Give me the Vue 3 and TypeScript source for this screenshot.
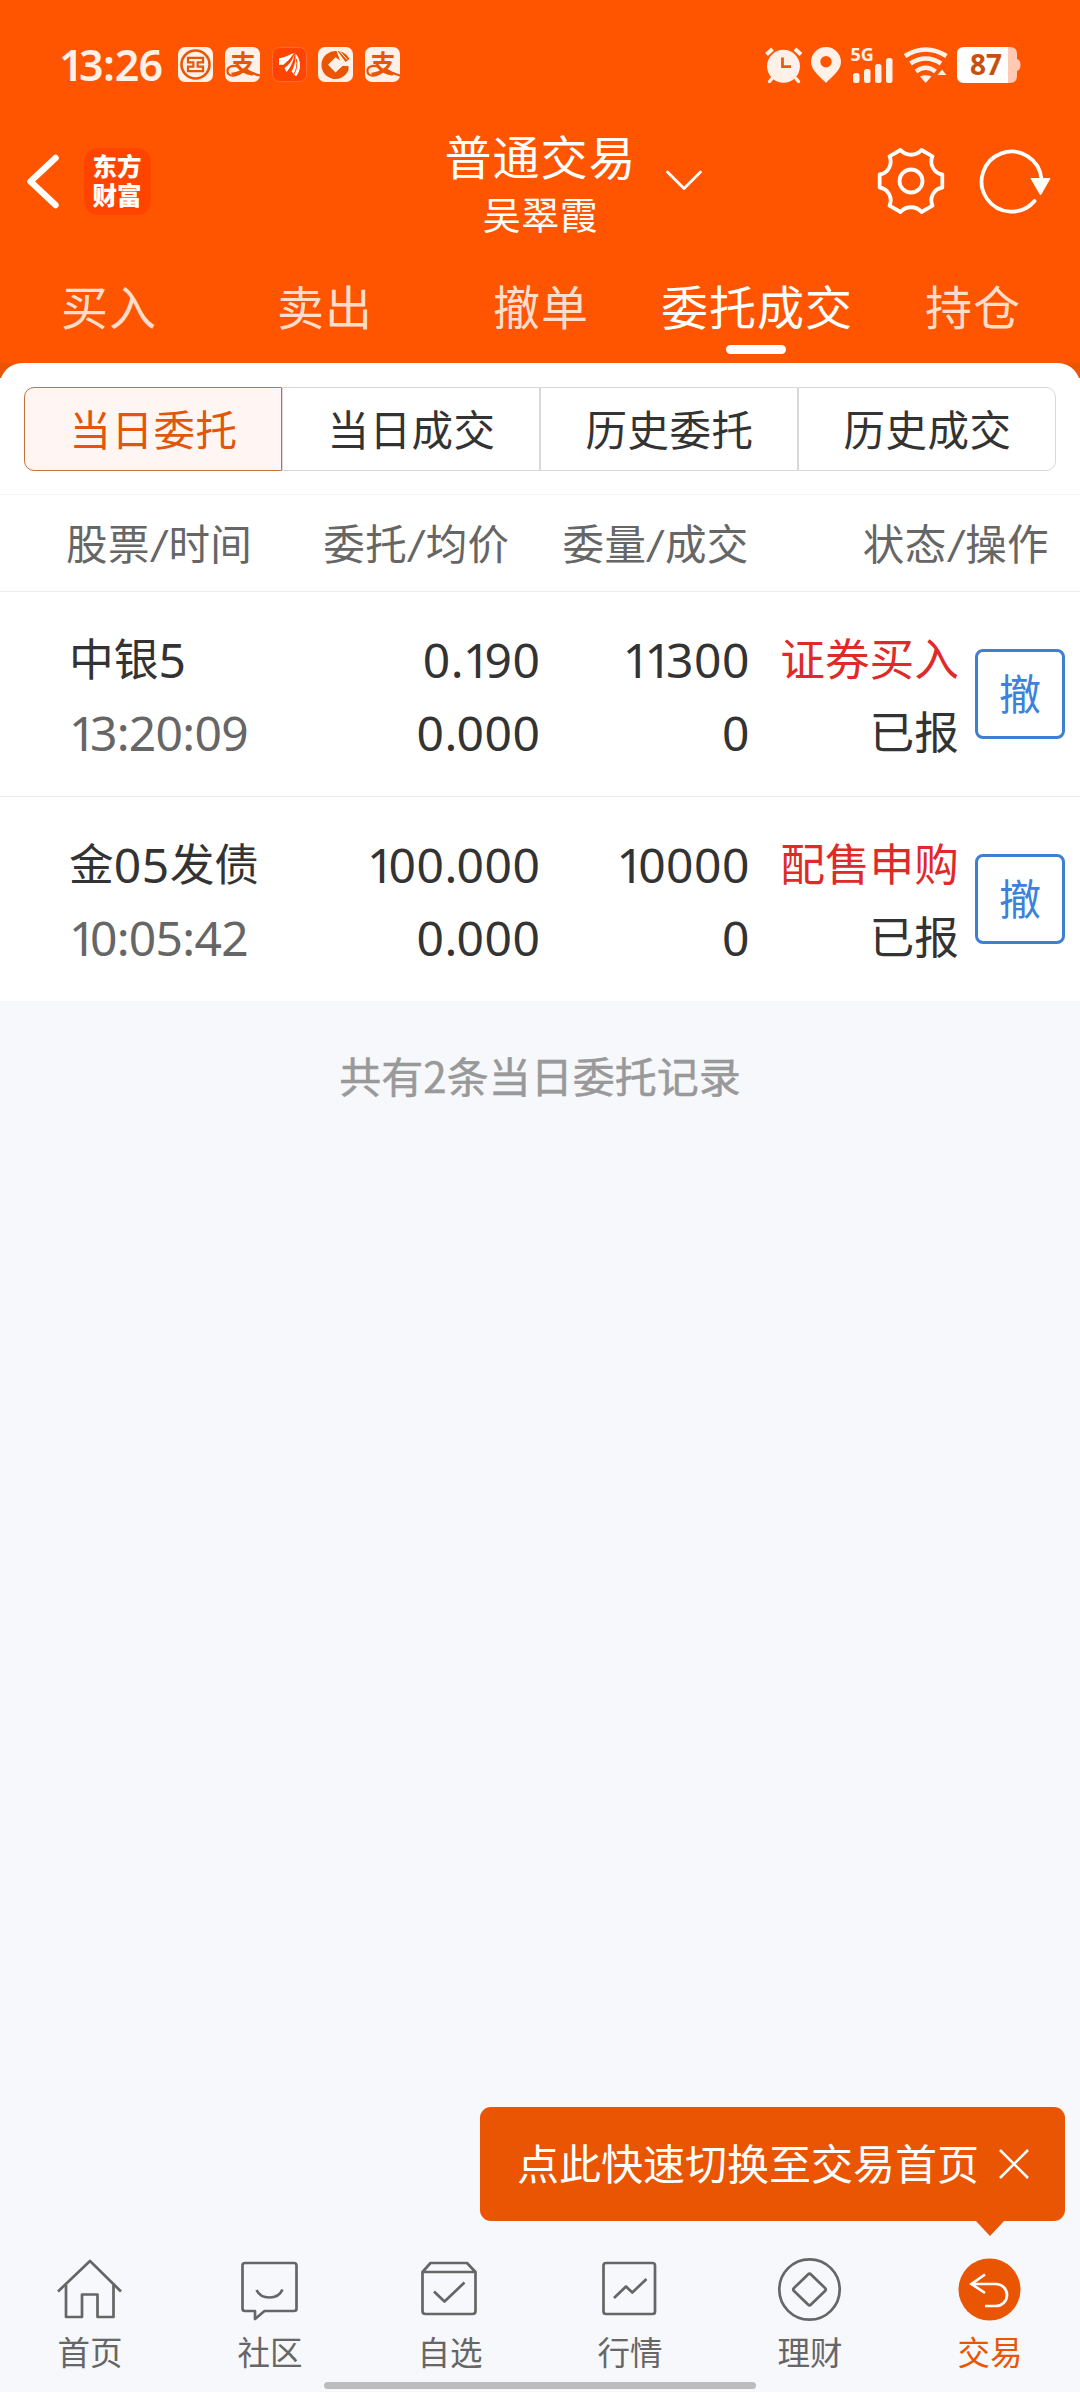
<script setup lang="ts">
interface Order {
  name: string
  time: string
  price: string
  avg: string
  qty: string
  filled: string
  side: string
  status: string
}

const tabs: string[] = ['买入', '卖出', '撤单', '委托成交', '持仓']
const activeTab = 3

const segments: string[] = ['当日委托', '当日成交', '历史委托', '历史成交']
const activeSegment = 0

const columns: [string, string][] = [
  ['股票', '时间'],
  ['委托', '均价'],
  ['委量', '成交'],
  ['状态', '操作'],
]

const orders: Order[] = [
  { name: '中银5', time: '13:20:09', price: '0.190', avg: '0.000', qty: '11300', filled: '0', side: '证券买入', status: '已报' },
  { name: '金05发债', time: '10:05:42', price: '100.000', avg: '0.000', qty: '10000', filled: '0', side: '配售申购', status: '已报' },
]

const navItems: { id: string; label: string }[] = [
  { id: 'home', label: '首页' },
  { id: 'community', label: '社区' },
  { id: 'watchlist', label: '自选' },
  { id: 'market', label: '行情' },
  { id: 'wealth', label: '理财' },
  { id: 'trade', label: '交易' },
]

// The figure "1" is set on a narrower body than the other digits.
const glyphs = (s: string): { ch: string; cls: string }[] =>
  [...s].map((ch) => ({
    ch,
    cls: ch === '1' ? 'one' : /[0-9]/.test(ch) ? 'digit' : /[.:]/.test(ch) ? 'dot' : '',
  }))
</script>

<template>
  <div class="screen">
    <header class="top">
      <div class="status">
        <span class="clock"><span v-for="(g, i) in glyphs('13:26')" :key="i" :class="g.cls">{{ g.ch }}</span></span>
        <div class="apps">
          <svg class="app" viewBox="0 0 35 35">
            <rect width="35" height="35" rx="7" fill="#fff0e8" />
            <circle cx="17.5" cy="17.5" r="14" fill="none" stroke="#ea5504" stroke-width="2.6" />
            <path d="M10 10.8H25V15.4H19.6V19.6H25V24.2H10V19.6H15.4V15.4H10Z" fill="none" stroke="#ea5504" stroke-width="2.2" />
            <path d="M14 13.2H21M14 21.8H21M17.5 13.2V21.8" stroke="#fff0e8" stroke-width="1.4" />
          </svg>
          <svg class="app" viewBox="0 0 35 35">
            <rect width="35" height="35" rx="7" fill="#fff0e8" />
            <text x="18" y="25.600" text-anchor="middle" class="pay">支</text>
            <path d="M15 20.500C7 17 2 20 2.500 24.500C3 30 12 30 18 24M21 22.500C26 26 30 27.500 35 28.500" fill="none" stroke="#ea5504" stroke-width="2.200" />
          </svg>
          <svg class="app" viewBox="0 0 35 35">
            <rect x=".5" y=".5" width="34" height="34" rx="7" fill="#ff4400" stroke="#ff6a35" />
            <path d="M22 6C17 8 12 10.500 7 11.500V18C9 17.500 10 17.500 11 18C15 15 19 11 22 6Z" fill="#fff" />
            <path d="M22.500 6.500C21 13 17 18 12.500 21L14.500 25C19 20 22 13 22.500 6.500Z" fill="#fff" />
            <path d="M23.500 6.500C24 14 22.500 19 19.500 24.500L24 29.500C30 22 29 13 23.500 6.500Z" fill="#fff" />
            <path d="M24.500 12C25.500 18 24.500 23 22 27" fill="none" stroke="#ff4400" />
          </svg>
          <svg class="app" viewBox="0 0 35 35">
            <rect width="35" height="35" rx="7" fill="#fff0e8" />
            <path d="M18.500 4A14 14 0 1 0 30.500 23V19H24.500L17.500 25.500L10 17.700L17.500 10.300L22 13.500Z" fill="#ea5504" />
            <path d="M19.500 4C25 4.500 29 7.500 31.500 12L27.500 15Z" fill="#ea5504" />
            <path d="M21.500 4L29 12.500" stroke="#fff0e8" stroke-width="1" />
          </svg>
          <svg class="app" viewBox="0 0 35 35">
            <rect width="35" height="35" rx="7" fill="#fff0e8" />
            <text x="18" y="25.600" text-anchor="middle" class="pay">支</text>
            <path d="M15 20.500C7 17 2 20 2.500 24.500C3 30 12 30 18 24M21 22.500C26 26 30 27.500 35 28.500" fill="none" stroke="#ea5504" stroke-width="2.200" />
          </svg>
        </div>
        <svg class="indicators" viewBox="0 0 256 36">
          <g fill="#fff0e8">
            <path d="M8 31.500L5.500 34.500M32 31.500L34.500 34.500" stroke="#fff0e8" stroke-width="3.400" stroke-linecap="round" />
            <path d="M2.500 7.500L8.500 2M37 7.500L31 2" stroke="#fff0e8" stroke-width="4" />
            <circle cx="19.500" cy="19.300" r="16.500" />
            <path d="M18.500 10.500V19.700H27" fill="none" stroke="#ee5a0c" stroke-width="2.800" />
            <path fill-rule="evenodd" d="M62 36C58 31 47 24 47 15A15 15 0 0 1 77 15C77 24 66 31 62 36ZM62 9A5.700 5.700 0 1 0 62 20.400A5.700 5.700 0 1 0 62 9Z" />
            <rect x="89" y="26" width="6.500" height="10" rx="2.500" />
            <rect x="100" y="22" width="6.500" height="14" rx="2.500" />
            <rect x="111" y="17" width="6.500" height="19" rx="2.500" />
            <rect x="122" y="11" width="6.500" height="25" rx="2.500" />
            <path d="M161.700 36L156 29.500Q161.700 27 167.400 29.500Z" />
            <path d="M173.500 28L178 22.500L182.300 28Z" />
          </g>
          <g fill="none" stroke="#fff0e8" stroke-width="4.600">
            <path d="M141 9Q161.700 -4 182.400 9" />
            <path d="M146.500 16.500Q161.700 6.500 177 16.500" />
            <path d="M152 24.500Q161.700 17 171.500 24.500" />
          </g>
          <text x="86.500" y="13.500" class="net">5G</text>
          <path d="M244 0H246Q253 0 253 7V12Q256.500 13 256.500 18T253 24V29Q253 36 246 36H243Z" fill="#ffc9b3" />
          <path d="M200 0H244V36H200Q193 36 193 29V7Q193 0 200 0Z" fill="#fff" />
          <text x="222" y="27.700" text-anchor="middle" class="charge">87</text>
        </svg>
      </div>

      <div class="bar">
        <svg class="back" viewBox="0 0 36 60"><path d="M31.500 7L6.500 30.500L31.500 54" /></svg>
        <div class="logo"><span>东方</span><span>财富</span></div>
        <div class="title">
          <h1>普通交易</h1>
          <p>吴翠霞</p>
        </div>
        <svg class="drop" viewBox="0 0 38 22"><path d="M2.500 2L19 18.500L35.500 2" /></svg>
        <svg class="gear" viewBox="-34 -34 68 68">
          <path d="M-10.500 -31A14 14 0 0 0 10.500 -31L21.500 -24.700A13 13 0 0 0 31.300 -6.500V6.500A13 13 0 0 0 21.500 24.700L10.500 31A14 14 0 0 0 -10.500 31L-21.500 24.700A13 13 0 0 0 -31.300 6.500V-6.500A13 13 0 0 0 -21.500 -24.700Z" />
          <circle r="11.500" />
        </svg>
        <svg class="reload" viewBox="0 0 74 68">
          <path d="M56.500 54A30 30 0 1 1 63.500 32" fill="none" stroke="#fff" stroke-width="3.800" stroke-linecap="round" />
          <path d="M53 31.500H72L62.500 48Z" fill="#fff" stroke="#fff" stroke-linejoin="round" />
        </svg>
      </div>

      <nav class="tabs">
        <span v-for="(t, i) in tabs" :key="t" :class="['tab', { on: i === activeTab }]">{{ t }}</span>
      </nav>
    </header>

    <div class="cap"><div class="cap-inner"></div></div>
    <section class="sheet">
      <div class="segments">
        <span v-for="(s, i) in segments" :key="s" :class="['seg', { on: i === activeSegment }]">{{ s }}</span>
      </div>
      <div class="thead">
        <span v-for="c in columns" :key="c[0]" class="th">{{ c[0] }}<i>/</i>{{ c[1] }}</span>
      </div>
      <div v-for="o in orders" :key="o.name" class="row">
        <div class="col name">
          <span><span v-for="(g, i) in glyphs(o.name)" :key="i" :class="g.cls">{{ g.ch }}</span></span>
          <span class="dim"><span v-for="(g, i) in glyphs(o.time)" :key="i" :class="g.cls">{{ g.ch }}</span></span>
        </div>
        <div class="col price">
          <span v-for="(v, k) in [o.price, o.avg]" :key="k"><span v-for="(g, i) in glyphs(v)" :key="i" :class="g.cls">{{ g.ch }}</span></span>
        </div>
        <div class="col qty">
          <span v-for="(v, k) in [o.qty, o.filled]" :key="k"><span v-for="(g, i) in glyphs(v)" :key="i" :class="g.cls">{{ g.ch }}</span></span>
        </div>
        <div class="col state">
          <span class="side">{{ o.side }}</span>
          <span>{{ o.status }}</span>
        </div>
        <button class="cancel">撤</button>
      </div>
    </section>

    <p class="summary">共有2条当日委托记录</p>

    <div class="tip">
      <span>点此快速切换至交易首页</span>
      <svg viewBox="0 0 30 30"><path d="M1 1L29 29M29 1L1 29" /></svg>
    </div>

    <nav class="dock">
      <div v-for="n in navItems" :key="n.id" :class="['item', { on: n.id === 'trade' }]">
        <svg viewBox="0 0 72 72">
          <template v-if="n.id === 'home'">
            <path d="M4 38.500L36 8L67 38.500" />
            <path d="M12 32V64H28V41.500H43.500V64H59.500V32" />
          </template>
          <template v-else-if="n.id === 'community'">
            <path d="M11 10H60Q62.500 10 62.500 12.500V55.500Q62.500 58 60 58H30.500L21 66V58H11Q8.500 58 8.500 55.500V12.500Q8.500 10 11 10Z" />
            <path d="M22.500 37Q26 44.500 35.500 44.500T48.500 36.500" />
          </template>
          <template v-else-if="n.id === 'watchlist'">
            <path d="M8.500 19L16.500 10H53L61.500 19V58Q61.500 61 58.500 61H11.500Q8.500 61 8.500 58ZM8.500 19H61.500" />
            <path d="M20 38.500L30.500 48.500L50.500 29.500" />
          </template>
          <template v-else-if="n.id === 'market'">
            <rect x="9.500" y="10" width="51.500" height="51" rx="2.500" />
            <path d="M20 45L32 33.500L38.300 39.500L52.500 26" />
          </template>
          <template v-else-if="n.id === 'wealth'">
            <circle cx="35.500" cy="36.500" r="30.200" />
            <path d="M34 21.500Q35.500 20 37 21.500L51 35Q52.500 36.500 51 38L37 51.500Q35.500 53 34 51.500L20 38Q18.500 36.500 20 35Z" />
          </template>
          <template v-else>
            <circle cx="35.500" cy="36.500" r="31" class="disc" />
            <path d="M31 21.500L17.500 31L31 40M17.500 31H42A11 11 0 0 1 42 53H31" class="arrow" />
          </template>
        </svg>
        <span>{{ n.label }}</span>
      </div>
    </nav>
    <div class="gesture"></div>
  </div>
</template>

<style>
body { margin: 0; }
</style>

<style scoped>
* { box-sizing: border-box; }
.screen {
  width: 1080px;
  height: 2392px;
  display: flex;
  flex-direction: column;
  background: #f7f8fb;
  color: #333;
  font-family: Lato, "Noto Sans CJK SC", sans-serif;
  overflow: hidden;
}
.top { height: 363px; flex: none; background: #ff5500; color: #fff; }
.status { display: flex; height: 120px; padding: 47px 60px 0 58px; }
.clock { width: 120px; padding-left: 1px; font: 600 43px/36px "Noto Sans", sans-serif; color: #fff0e8; white-space: nowrap; }
.clock .one { letter-spacing: -4.500px; }
.clock .digit { letter-spacing: -.8px; }
.apps { display: flex; gap: 11.8px; flex: 1; }
.app { width: 35px; height: 35px; display: block; overflow: visible; }
.pay { font: 700 25px "Noto Sans CJK SC", sans-serif; fill: #ea5504; }
.indicators { width: 256px; height: 36px; overflow: visible; }
.net { font: 700 18px "Open Sans", sans-serif; fill: #fff0e8; }
.charge { font: 700 28px "Open Sans", sans-serif; fill: #c8500f; }

.bar { display: flex; height: 131px; padding-left: 24px; align-items: flex-start; }
.back { width: 36px; height: 60px; margin-top: 31px; fill: none; stroke: #fff; stroke-width: 6.500; stroke-linecap: round; stroke-linejoin: round; }
.logo {
  width: 67px; height: 67px; margin: 28px 0 0 23.500px; padding-bottom: 2px; border-radius: 14px; background: #ff4400;
  display: flex; flex-direction: column; align-items: center; justify-content: center;
  font-size: 24.500px; line-height: 29px; font-weight: 900;
}
.title { width: 240px; margin-left: 269px; padding-left: 2px; text-align: center; }
.title h1 { margin: 7px 0 0; font-size: 47px; letter-spacing: 1px; line-height: 60px; font-weight: 400; }
.title p { margin: 2px 0 0; font-size: 38px; letter-spacing: .5px; line-height: 50px; }
.drop { width: 38px; height: 22px; margin: 50px 0 0 5px; fill: none; stroke: #fff; stroke-width: 2.800; stroke-linecap: round; stroke-linejoin: round; }
.gear { width: 68px; height: 68px; margin: 27px 0 0 174px; fill: none; stroke: #fff; stroke-width: 3.800; stroke-linejoin: round; }
.reload { width: 74px; height: 68px; margin: 27px 0 0 33px; }

.tabs { display: flex; height: 112px; padding-top: 26px; }
.tab { width: 216px; height: 86px; display: flex; flex-direction: column; align-items: center; font-size: 47px; letter-spacing: 1px; text-indent: 2px; line-height: 61px; color: #ffddcc; }
.tab.on { color: #fff; }
.tab.on::after { content: ""; width: 60px; height: 9px; margin-top: 7px; border-radius: 5px; background: #fff; }

.cap { flex: none; height: 15px; background: #ea5504; overflow: hidden; }
.cap-inner { height: 40px; border-radius: 22px 22px 0 0; background: #fff; }
.sheet { flex: none; background: #fff; padding-top: 9px; }
.segments { display: flex; height: 84px; margin: 0 24px 23px; }
.seg { flex: 1; border: 1px solid #d8d8d8; font-size: 41.500px; letter-spacing: .5px; text-indent: 1px; line-height: 84px; text-align: center; }
.seg:first-child { border-radius: 10px 0 0 10px; }
.seg:last-child { border-radius: 0 10px 10px 0; }
.seg.on { border-color: #c4713a; background: #fff6f3; color: #e2560c; }
.thead {
  display: flex; justify-content: space-between; height: 98px; padding: 0 31px 0 66px;
  border-top: 1px solid #f5f5f5; border-bottom: 1px solid #ebebeb;
  font-size: 41.500px; letter-spacing: .4px; line-height: 98px; color: #666;
}
.thead .th:nth-child(3) { margin: 0 60px 0 -1px; }
.thead .th:nth-child(2) { margin-left: 17px; }
.thead i { display: inline-block; width: 18.600px; text-align: center; font-style: normal; transform: scaleX(1.150); }
.row { display: flex; height: 205px; padding-top: 31px; border-bottom: 1px solid #ebebeb; font-size: 44.700px; line-height: 73px; white-space: nowrap; }
.row:last-child { height: 204px; border-bottom: 0; }
.col { display: flex; flex-direction: column; }
.col > span { height: 73px; }
.name { width: 270px; padding-left: 69px; }
.price { width: 270.500px; align-items: flex-end; }
.qty { width: 209.500px; align-items: flex-end; }
.state { width: 209px; align-items: flex-end; }
.row .digit, .row .one, .row .dot { font-family: "Noto Sans", sans-serif; font-size: 48px; line-height: 1; vertical-align: -1.500px; }
.row .digit { letter-spacing: .5px; }
.row .dot { letter-spacing: -.8px; }
.row .one { letter-spacing: -5.800px; }
.row .dim .digit { letter-spacing: -.7px; }
.row .dim .one { letter-spacing: -6.500px; }
.dim { color: #666; }
.side { color: #e02a2a; }
.cancel {
  width: 90px; height: 90px; margin: 26px 0 0 16px; padding: 0; background: #fff; color: #3a82dc;
  border: 3px solid #3d80d2; border-radius: 8px; font-family: inherit; font-size: 42px; line-height: 84px;
}
.summary { margin: 46px 0 0; font-size: 42px; line-height: 56px; text-align: center; color: #999; font-family: "Noto Sans CJK SC", sans-serif; -webkit-text-stroke: .5px #999; }

.tip {
  position: relative; width: 585px; height: 114px; margin: auto 15px 0 auto; padding: 0 36px 0 37px; border-radius: 11px;
  display: flex; align-items: center; justify-content: space-between; background: #ea5504; color: #fff; font-size: 42px; line-height: 60px;
}
.tip::after { content: ""; position: absolute; top: 113px; right: 60px; border: 15px solid transparent; border-top: 16px solid #ea5504; border-bottom: 0; }
.tip svg { width: 30px; height: 30px; fill: none; stroke: #fff; stroke-width: 2.500; }
.dock { display: flex; flex: none; height: 129px; margin-top: 32px; }
.item { width: 180px; display: flex; flex-direction: column; align-items: center; color: #666; font-size: 32.500px; line-height: 44px; }
.item svg { width: 72px; height: 72px; margin-bottom: 6px; fill: none; stroke: currentColor; stroke-width: 2.700; stroke-linejoin: round; }
.item.on { color: #ea5504; }
.item .disc { fill: #ea5504; stroke: none; }
.item .arrow { stroke: #fff; stroke-linejoin: miter; }
.gesture { flex: none; width: 432px; height: 7px; margin: 0 auto 3px; border-radius: 4px; background: #bcbcbc; }
</style>
